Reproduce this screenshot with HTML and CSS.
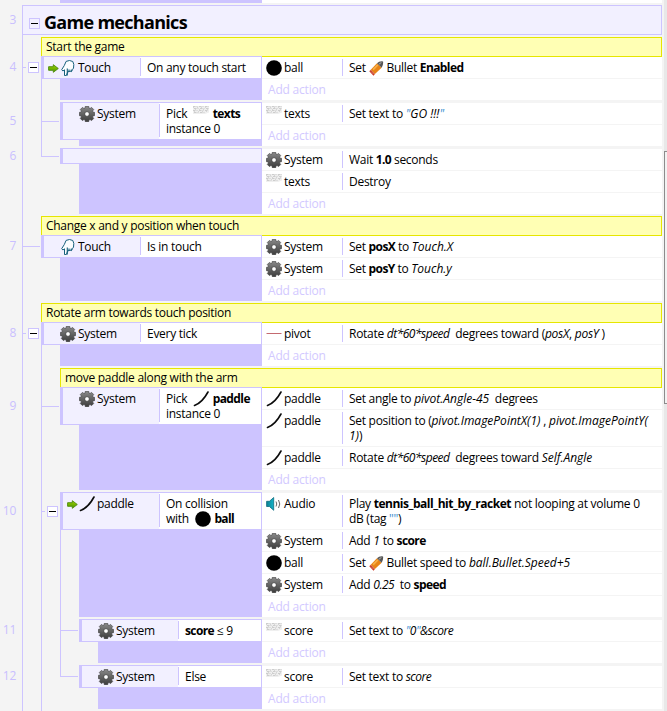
FILE: index.html
```
<!DOCTYPE html>
<html lang="en">
<head>
<meta charset="utf-8">
<title>Event sheet</title>
<link rel="stylesheet" href="styles.css">
</head>
<body>
<svg class="defs" width="0" height="0">
  <defs>
    <linearGradient id="gearFill" x1="0" y1="0" x2="0" y2="1"><stop offset="0" stop-color="#8a8a8a"/><stop offset="1" stop-color="#3c3c3c"/></linearGradient>
    <linearGradient id="arrowFill" x1="0" y1="0" x2="0" y2="1"><stop offset="0" stop-color="#9fd400"/><stop offset="1" stop-color="#4b9400"/></linearGradient>
    <linearGradient id="spkFill" x1="0" y1="0" x2="1" y2="0"><stop offset="0" stop-color="#0f7f93"/><stop offset="1" stop-color="#14b4c8"/></linearGradient>
    <symbol id="gear" viewBox="0 0 16 16">
      <path fill="url(#gearFill)" stroke="#3a3a3a" stroke-width=".6" stroke-linejoin="round" d="M6.300 .3h3.400l.3 1.800 1 .4 1.600-1.100 2.100 2.100-1.100 1.600.4 1 1.700.3v3.200l-1.700.3-.4 1 1.100 1.600-2.100 2.100-1.600-1.100-1 .4-.3 1.800H6.300L6 13.900l-1-.4-1.600 1.100-2.100-2.100 1.100-1.600-.4-1-1.700-.3V6.400L2 6.100l.4-1-1.100-1.600 2.100-2.100L5 2.500l1-.4z"/>
      <circle cx="8" cy="8" r="2.400" fill="#fff" stroke="#444" stroke-width=".9"/>
    </symbol>
    <symbol id="hand" viewBox="0 0 16 16">
      <path fill="#fbfdff" stroke="#17607c" stroke-width="1" stroke-linejoin="round" d="M6.300 15.600h-1.800V9.800L2.900 11 1.700 9.700l2.600-4.200L6.100 1.400 9.500.5l3.300 1 1 3-.3 3.600-1 1.500-1 2-1.700-.6-.8.9-1.200-.4z"/>
      <path fill="none" stroke="#17607c" stroke-width="1.100" d="M7.300 15.600V8.500M9 12V9.500M11.300 11.500V9.500"/>
    </symbol>
    <symbol id="arrow" viewBox="0 0 11 9">
      <path fill="url(#arrowFill)" stroke="#4c8a0c" stroke-width=".9" stroke-linejoin="round" d="M.6 2.700h4.700V.7l5 3.800-5 3.800V6.300H.6z"/>
    </symbol>
    <symbol id="ball" viewBox="0 0 16 16"><circle cx="8" cy="8" r="7.800"/></symbol>
    <symbol id="pivot" viewBox="0 0 16 16"><path fill="#c46a70" d="M.5 7h15v1H.5z"/></symbol>
    <symbol id="paddle" viewBox="0 0 16 16"><path fill="none" stroke="#0b0b0b" stroke-width="1.600" stroke-linecap="round" d="M1.500 14.500C7 12.500 11.500 7.500 15 1"/></symbol>
    <symbol id="text" viewBox="0 0 16 16">
      <path fill="#efefef" d="M0 0h16v6.500l-4 1.500H0z"/>
      <path fill="none" stroke="#cdcdcd" stroke-width="1" stroke-dasharray="2.500 1 1 1.500" d="M0 .5h16M1 2.500h15M0 4.500h15M1 6.500h11"/>
      <path fill="none" stroke="#d6d6d6" stroke-width="1" stroke-dasharray="1 3" d="M0 1.500h16M2 3.500h14M1 5.500h14"/>
    </symbol>
    <symbol id="audio" viewBox="0 0 16 16">
      <path fill="url(#spkFill)" stroke="#0d6c80" stroke-width=".8" d="M.6 5.300h2.800L7.700 1.500v12.800L3.400 10.500H.6z"/>
      <path fill="none" stroke="#666" stroke-width="1" d="M10 5.500q1.500 2.500 0 5M12.500 4q2.500 4 0 8"/>
    </symbol>
    <symbol id="bullet" viewBox="0 0 16 16">
      <path fill="#e88416" d="M1.800 9.200 8.500 2.300l5 4.800-7.200 6.700z"/>
      <path fill="#f7b14a" d="M3.800 8.600 8.700 3.600l1.300 1.300-5 5z"/>
      <path fill="#555" d="M8.500 2.300Q11-.2 15 .4q.5 4-1.500 6.700z"/>
      <path fill="#999" d="M10.300 2.700Q12 1.200 14 1.100L11.500 4z"/>
      <path fill="#c8321c" d="m1.800 9.200 4.500 4.600-1.500 1.800L.3 11z"/>
      <path stroke="#fff" stroke-width=".7" stroke-dasharray="1 1" d="m1.200 10.200 4.400 4.400"/>
    </symbol>
  </defs>
</svg>

<div class="app">
<main class="sheet">

  <div class="row first"><span class="num"></span><i class="pad"></i><i class="pad"></i><div class="tail"></div><div class="tail-actions"></div></div>

  <div class="row group">
    <span class="num">3</span>
    <div class="group-box"><span class="toggle"></span><h1>Game mechanics</h1></div>
  </div>

  <div class="row"><span class="num"></span><i class="rail line"></i><div class="comment">Start the game</div></div>

  <div class="row joined one">
    <span class="num">4</span><i class="rail line box"><span class="toggle"></span></i>
    <div class="event">
      <div class="left parent">
        <div class="cond"><div class="obj"><svg class="trigger"><use href="#arrow"/></svg><svg><use href="#hand"/></svg>Touch</div><div class="what">On any touch start</div></div>
        <div class="fill"></div>
      </div>
      <div class="actions">
        <div class="act"><div class="who"><svg><use href="#ball"/></svg>ball</div><div class="do">Set <svg><use href="#bullet"/></svg> Bullet <b>Enabled</b></div></div>
        <div class="add">Add action</div>
      </div>
    </div>
  </div>

  <div class="row two">
    <span class="num">5</span><i class="rail line"></i><i class="rail line stub"></i>
    <div class="event">
      <div class="left">
        <div class="cond"><div class="obj"><svg><use href="#gear"/></svg>System</div><div class="what">Pick &nbsp;<svg><use href="#text"/></svg> <b>texts</b><br>instance 0</div></div>
        <div class="fill"></div>
      </div>
      <div class="actions">
        <div class="act"><div class="who"><svg><use href="#text"/></svg>texts</div><div class="do">Set text to <em><q>"</q>GO !!!<q>"</q></em></div></div>
        <div class="add">Add action</div>
      </div>
    </div>
  </div>

  <div class="row none">
    <span class="num">6</span><i class="rail line"></i><i class="rail stub last"></i>
    <div class="event">
      <div class="left"><div class="cond"></div><div class="fill"></div></div>
      <div class="actions">
        <div class="act"><div class="who"><svg><use href="#gear"/></svg>System</div><div class="do">Wait <b>1.0</b> seconds</div></div>
        <div class="act"><div class="who"><svg><use href="#text"/></svg>texts</div><div class="do">Destroy</div></div>
        <div class="add">Add action</div>
      </div>
    </div>
  </div>

  <div class="row"><span class="num"></span><i class="rail line"></i><div class="comment">Change x and y position when touch</div></div>

  <div class="row joined one">
    <span class="num">7</span><i class="rail line stub"></i>
    <div class="event">
      <div class="left">
        <div class="cond"><div class="obj"><svg><use href="#hand"/></svg>Touch</div><div class="what">Is in touch</div></div>
        <div class="fill"></div>
      </div>
      <div class="actions">
        <div class="act"><div class="who"><svg><use href="#gear"/></svg>System</div><div class="do">Set <b>posX</b> to <em>Touch.X</em></div></div>
        <div class="act"><div class="who"><svg><use href="#gear"/></svg>System</div><div class="do">Set <b>posY</b> to <em>Touch.y</em></div></div>
        <div class="add">Add action</div>
      </div>
    </div>
  </div>

  <div class="row"><span class="num"></span><i class="rail line"></i><div class="comment">Rotate arm towards touch position</div></div>

  <div class="row joined one">
    <span class="num">8</span><i class="rail line box"><span class="toggle"></span></i>
    <div class="event">
      <div class="left parent">
        <div class="cond"><div class="obj"><svg><use href="#gear"/></svg>System</div><div class="what">Every tick</div></div>
        <div class="fill"></div>
      </div>
      <div class="actions">
        <div class="act"><div class="who"><svg><use href="#pivot"/></svg>pivot</div><div class="do">Rotate <em class="calc">dt*60*speed</em> &nbsp;degrees toward (<em class="name">posX</em>, <em class="name">posY</em> )</div></div>
        <div class="add">Add action</div>
      </div>
    </div>
  </div>

  <div class="row"><span class="num"></span><i class="rail line"></i><i class="rail line"></i><div class="comment">move paddle along with the arm</div></div>

  <div class="row joined two">
    <span class="num">9</span><i class="rail line"></i><i class="rail line stub"></i>
    <div class="event">
      <div class="left">
        <div class="cond"><div class="obj"><svg><use href="#gear"/></svg>System</div><div class="what">Pick &nbsp;<svg><use href="#paddle"/></svg> <b>paddle</b><br>instance 0</div></div>
        <div class="fill"></div>
      </div>
      <div class="actions">
        <div class="act"><div class="who"><svg><use href="#paddle"/></svg>paddle</div><div class="do">Set angle to <em>pivot.Angle-45</em> &nbsp;degrees</div></div>
        <div class="act tall"><div class="who"><svg><use href="#paddle"/></svg>paddle</div><div class="do">Set position to (<em>pivot.ImagePointX(1)</em> , <em>pivot.ImagePointY(<br>1)</em>)</div></div>
        <div class="act"><div class="who"><svg><use href="#paddle"/></svg>paddle</div><div class="do">Rotate <em class="calc">dt*60*speed</em> &nbsp;degrees toward <em>Self.Angle</em></div></div>
        <div class="add">Add action</div>
      </div>
    </div>
  </div>

  <div class="row two">
    <span class="num">10</span><i class="rail line"></i><i class="rail line box"><span class="toggle"></span></i>
    <div class="event">
      <div class="left parent">
        <div class="cond"><div class="obj"><svg class="trigger"><use href="#arrow"/></svg><svg><use href="#paddle"/></svg>paddle</div><div class="what">On collision<br>with &nbsp;<svg><use href="#ball"/></svg> <b>ball</b></div></div>
        <div class="fill"></div>
      </div>
      <div class="actions">
        <div class="act tall"><div class="who"><svg><use href="#audio"/></svg>Audio</div><div class="do">Play <b class="asset">tennis_ball_hit_by_racket</b> not looping at volume 0<br>dB (tag <q>""</q>)</div></div>
        <div class="act"><div class="who"><svg><use href="#gear"/></svg>System</div><div class="do">Add <em>1</em> to <b>score</b></div></div>
        <div class="act"><div class="who"><svg><use href="#ball"/></svg>ball</div><div class="do">Set <svg><use href="#bullet"/></svg> Bullet speed to <em>ball.Bullet.Speed+5</em></div></div>
        <div class="act"><div class="who"><svg><use href="#gear"/></svg>System</div><div class="do">Add <em class="calc">0.25</em> &nbsp;to <b>speed</b></div></div>
        <div class="add">Add action</div>
      </div>
    </div>
  </div>

  <div class="row one">
    <span class="num">11</span><i class="rail line"></i><i class="rail line"></i><i class="rail line stub"></i>
    <div class="event">
      <div class="left">
        <div class="cond"><div class="obj"><svg><use href="#gear"/></svg>System</div><div class="what"><b>score</b> ≤ 9</div></div>
        <div class="fill"></div>
      </div>
      <div class="actions">
        <div class="act"><div class="who"><svg><use href="#text"/></svg>score</div><div class="do">Set text to <em class="calc"><q>"</q>0<q>"</q>&amp;score</em></div></div>
        <div class="add">Add action</div>
      </div>
    </div>
  </div>

  <div class="row one">
    <span class="num">12</span><i class="rail line"></i><i class="rail line"></i><i class="rail stub last"></i>
    <div class="event">
      <div class="left">
        <div class="cond"><div class="obj"><svg><use href="#gear"/></svg>System</div><div class="what">Else</div></div>
        <div class="fill"></div>
      </div>
      <div class="actions">
        <div class="act"><div class="who"><svg><use href="#text"/></svg>score</div><div class="do">Set text to <em class="calc">score</em></div></div>
        <div class="add">Add action</div>
      </div>
    </div>
  </div>

  <div class="row end"><span class="num"></span><i class="rail line"></i><i class="rail line"></i></div>
</main>
<div class="scrollbar"><div class="thumb"></div></div>
</div>
</body>
</html>
```
FILE: styles.css
```
:root {
  --line: #cdc4ff;
  --pale: #f2f0ff;
  --page: #f4f4f4;
}
* { box-sizing: border-box; }
body {
  margin: 0;
  background: var(--page);
  color: #000;
  font: 12px/15px "Open Sans", "Noto Sans", sans-serif;
  letter-spacing: -0.28px;
}
b { letter-spacing: -0.6px; }
b.asset { letter-spacing: -0.48px; }
em { letter-spacing: 0; }
em.name { letter-spacing: -0.25px; }
em.calc { letter-spacing: -0.5px; }
.defs { display: block; height: 0; }
.app { display: flex; justify-content: space-between; width: 667px; height: 711px; overflow: hidden; }
.sheet { width: 662px; }

.row { display: flex; padding-top: 2px; --h: 20px; --gap: 2px; }
.row.first { padding-top: 0; height: 3px; }
.row.joined { padding-top: 0; margin-top: -1px; --gap: 0px; }
.row.one { --h: 23px; }
.row.two { --h: 38px; }
.row.none { --h: 16px; }
.row.end { height: 2px; padding: 0; }
.row > .event, .row > .comment { flex: 1; min-width: 0; }

.num {
  flex: none;
  width: 22px;
  height: var(--h);
  padding-right: 6px;
  line-height: calc(var(--h) - 1px);
  text-align: right;
  color: #c9bfff;
}
.pad { width: 19px; }

/* Tree connectors: a vertical line with an optional horizontal stub */
.rail {
  flex: none;
  width: 19px;
  margin-top: calc(var(--gap) * -1);
  --v: linear-gradient(var(--line), var(--line)) 0 0 / 1px 100% no-repeat;
  --mid: calc(var(--gap) + (var(--h) - 1px) / 2);
}
.rail.line { background: var(--v); }
.rail.stub { background: var(--v), linear-gradient(var(--line), var(--line)) 0 var(--mid) / 18px 1px no-repeat; }
.rail.last { background: linear-gradient(var(--line), var(--line)) 0 0 / 1px var(--mid) no-repeat, linear-gradient(var(--line), var(--line)) 0 var(--mid) / 18px 1px no-repeat; }
.rail.box {
  padding: calc(var(--mid) - 5px) 0 0 6px;
  background: var(--v), linear-gradient(var(--line), var(--line)) 0 var(--mid) / 4px 1px no-repeat;
}
.two .rail { --mid: calc(var(--gap) + 19px); }
.none .rail { --mid: calc(var(--gap) + 8px); }
.toggle {
  display: block;
  width: 11px;
  height: 11px;
  border: 1px solid var(--line);
  background: linear-gradient(#000, #000) center / 7px 1px no-repeat #fff;
}

.tail { flex: 1; background: var(--line); }
.tail-actions { width: 400px; background: #fff; }

.group { --h: 30px; }
.group-box {
  display: flex;
  flex: 1;
  height: 30px;
  padding-left: 6px;
  border: 1px solid var(--line);
  background: var(--pale);
}
.group-box .toggle { margin-top: 12px; background-color: var(--pale); }
.group-box h1 { margin: 0 0 0 4px; font-size: 18px; line-height: 32px; letter-spacing: -0.7px; }

.comment {
  height: 20px;
  padding-left: 4px;
  border: 1px solid #e6e600;
  background: #ffffb4;
  line-height: 18px;
}

.event { display: flex; }
.left { display: flex; flex: 1; flex-direction: column; min-width: 0; }
.left.parent { background: linear-gradient(var(--line), var(--line)) 0 0 / 1px 100% no-repeat; }
.fill { flex: 1; margin-left: 19px; background: var(--line); }
.cond {
  display: flex;
  height: var(--h);
  border: 1px solid var(--line);
  border-left-width: 3px;
  background: #fff;
}
.none .cond { background: var(--pale); }
.obj {
  display: flex;
  flex: none;
  width: 96px;
  padding: 3px 0 0 16px;
  background: var(--pale);
}
.obj .trigger { width: 11px; height: 9px; margin: 4px 4px 0 -12px; }
.obj .trigger + svg { margin-left: -3px; }
.what {
  flex: 1;
  margin: 1px 0 2px;
  padding: 2px 0 0 6px;
  border-left: 1px solid var(--line);
  white-space: nowrap;
}
svg { flex: none; width: 16px; height: 16px; margin-right: 2px; }
.what svg, .do svg { display: inline-block; margin: -4px 0 -4px; }
.what svg { margin-right: 1px; }
.do svg { width: 15px; height: 15px; }

.actions { flex: none; width: 400px; margin-top: 1px; }
.act { display: flex; height: 22px; border-bottom: 1px solid var(--page); background: #fff; }
.act.tall { height: 37px; }
.who { display: flex; width: 80px; padding: 3px 0 0 4px; }
.do {
  flex: 1;
  margin: 2px 0;
  padding: 1px 0 0 6px;
  border-left: 1px solid var(--line);
  white-space: nowrap;
}
.add { height: 21px; padding: 3px 0 0 6px; background: #fff; color: #d2c9ff; letter-spacing: -0.2px; }
q { quotes: none; color: #3d8fd0; }
q::before, q::after { content: none; }

.scrollbar { width: 3px; padding-top: 151px; background: #e8e8e8; }
.thumb { height: 253px; border: solid #8c8c8c; border-width: 1px 0 1px 1px; background: #f2f2f2; }
```
